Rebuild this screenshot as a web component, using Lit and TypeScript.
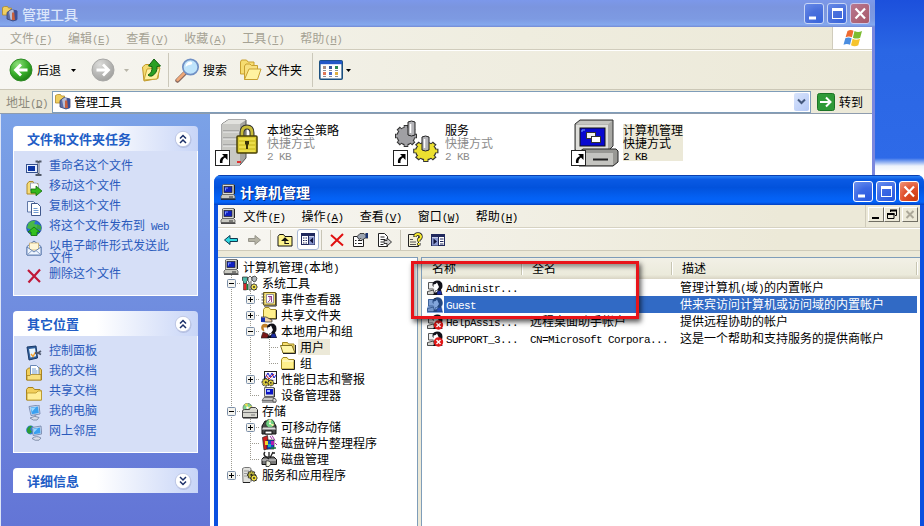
import { LitElement, html, css, svg, nothing } from "lit";
import { customElement, property } from "lit/decorators.js";

const SANS = css`"Noto Sans CJK SC", "Liberation Sans", sans-serif`;
const MONO = css`"Liberation Mono", "DejaVu Sans Mono", monospace`;

const shared = css`
  * { box-sizing: border-box; }
  .l { font-family: ${MONO}; font-size: 11px; letter-spacing: -0.6px; line-height: 0; vertical-align: 0.5px; white-space: pre; }
  svg { display: block; flex: none; }
  .t { white-space: nowrap; }
`;

/* Latin runs sit on a 6px grid, half the width of an ideograph. */
const t = (s: string) =>
  s.split(/([\x20-\x7e]+)/).map((p) => (/^[\x20-\x7e]+$/.test(p) ? html`<span class="l">${p}</span>` : p));

const pc = svg`<path d="M2.500 1l1-.5h10.500v9.500l-1 1H2.500z" fill="#dcdcd4" stroke="#555" stroke-width=".8"/><rect x="4" y="2.500" width="8" height="6" fill="#1020c0" stroke="#222" stroke-width=".7"/><path d="M5 3.500h3v1H6v2H5z" fill="#7a98ff"/><path d="M1 12l1.500-1.500h11l1.500 1.500v2.500H1z" fill="#c8c8c0" stroke="#555" stroke-width=".8"/><path d="M9 13h4" stroke="#333"/><path d="M14.500 1v9M1 15.300h14.500" stroke="#222"/>`;
const folder = svg`<path d="M1.500 4.500l1.500-2h4l1.500 2h5.500v9.500H1.500z" fill="#fff08c" stroke="#a08820"/><path d="M2.500 6h11" stroke="#fffde0"/><path d="M2 14.500h12.500V5" fill="none" stroke="#222"/>`;
const user = svg`<path d="M1.500 2.500h6v6.500h-6z" fill="#eee" stroke="#555"/><path d="M.5 11.500l6-1.500 1 4.500H.5z" fill="#d4d4d0" stroke="#222" stroke-width=".8"/><path d="M5.500 5.500Q5 .8 10 .5Q15.500.5 15.500 6Q15.500 9 14 9.500L15.500 15H6L8.500 10.500Z" fill="#101018"/><path d="M6.500 4.500q2.500 0 3.500-2l2 4.500-2 3H7.500L7 8.500H5.800l.7-2z" fill="#fff"/><path d="M8.500 10.500l3 0-3 2.500z" fill="#fff"/><path d="M10.500 11.500l3-1 1.500 4h-5z" fill="#1c2ca0"/>`;
const gear = svg`<path d="M8 1v14M1 8h14M3 3l10 10M13 3L3 13" stroke="#222" stroke-width="3.400"/><circle cx="8" cy="8" r="5.400" fill="#222"/><path d="M8 2v12M2 8h12M3.700 3.700l8.600 8.600M12.300 3.700l-8.600 8.600" stroke="currentColor" stroke-width="1.800"/><circle cx="8" cy="8" r="4.500" fill="currentColor"/><circle cx="8" cy="8" r="1.800" fill="#222"/>`;
const bigGear = svg`<g fill="none" stroke="#333"><path d="M12 1v22M1 12h22M4.200 4.200l15.600 15.600M19.800 4.200L4.200 19.800" stroke-width="4.600"/></g><circle cx="12" cy="12" r="9.300" fill="#333"/><path d="M12 2v20M2 12h20M5 5l14 14M19 5L5 19" stroke="currentColor" stroke-width="3"/><circle cx="12" cy="12" r="8.300" fill="currentColor"/>`;
const flag = svg`<path d="M4.500 1.500Q7.500-.5 10.500 1.200L8.900 7.800Q5.800 6 2.600 7.800Z" fill="#ee6a30"/><path d="M11.500 1.600Q15 3.500 19 1.600L17.200 8.200Q13.500 10 9.900 8.200Z" fill="#7cbc32"/><path d="M2.300 8.800Q5.500 7 8.600 8.800L7 15.300Q4 13.700.5 15.300Z" fill="#4b8ee0"/><path d="M9.600 9.300Q13.300 11 17 9.300L15.300 15.800Q11.700 17.500 8 15.800Z" fill="#f6c42c"/>`;

const ICONS: Record<string, unknown> = {
  pc, folder, user, flag,
  cross: svg`<path d="M2 2L14 14M14 1.500L2.500 14.500" stroke="#c01838" stroke-width="2.200" fill="none"/>`,
  redx: svg`<path d="M2 3L14 13.500M14 2L2 14" stroke="#e01010" stroke-width="2" fill="none"/>`,
  admin: svg`<path d="M.5 1.500l2-1h3l1 1.500h3V9h-9z" fill="#f0cf60" stroke="#b08a28" stroke-width=".8"/><path d="M5 6.500l4-3 6 1.500v8.500l-4 1.500-6-2z" fill="#5d6ea8" stroke="#3b4370" stroke-width=".8"/><path d="M7 5.500l3-2 1.500.5v10l-3-.500z" fill="#b8bed6"/><path d="M10 6.500h3.500v7.500H10z" fill="#c9603c"/><path d="M12 4l3 1v9l-2 .500z" fill="#3d4f96"/>`,
  rename: svg`<rect x=".5" y="4.500" width="11" height="8" fill="#e8f0ff" stroke="#35508c"/><rect x="2" y="6" width="7" height="5" fill="#0a34a4"/><path d="M9.500 1.500h2l1 1 1-1h2M12.500 2v12M9.500 15h2l1-1 1 1h2" fill="none" stroke="#505868" stroke-width="1.800"/><path d="M12.500 3v10" stroke="#d0d4e0" stroke-width=".7"/>`,
  move: svg`<path d="M1 4l2-2.500h4l1 2h4V14H1z" fill="#f6dc78" stroke="#ae8a28"/><path d="M4.500 3h6l2 2v6h-8z" fill="#fff" stroke="#8898b8" stroke-width=".8"/><path d="M5 9h5V6l6 5-6 4.800V13H5z" fill="#35b81e" stroke="#15700c" stroke-width=".8"/>`,
  copy: svg`<path d="M1.500 1.500h6l2 2V12h-8z" fill="#f4f8ff" stroke="#6078a8"/><path d="M5.500 3.500h6l3 3V15.500h-9z" fill="#fff" stroke="#40588c"/><path d="M7.500 8.500h4M7.500 10.500h5M7.500 12.500h5" stroke="#6f9ad0"/>`,
  web: svg`<circle cx="8" cy="7.800" r="7.400" fill="#2b70d0" stroke="#17488c" stroke-width=".7"/><path d="M2.500 3q4-3 7-2L8 4l4 1-2 4-4 1-5-2z" fill="#48b848"/><path d="M11 4l4 2v4L11 9z" fill="#3aa640"/><path d="M8 7l6 5h-3v3.500H5V12H2z" fill="#33c020" stroke="#127008" stroke-width=".8"/>`,
  mail: svg`<path d="M1 6.500L8 1l7 5.500V15H1z" fill="#dce8fa" stroke="#5a78ac"/><path d="M3.500 3h9v7h-9z" fill="#fff6d8" stroke="#c8a860" stroke-width=".7"/><path d="M1 7l7 5 7-5v8H1z" fill="#eef5ff" stroke="#5a78ac" stroke-width=".9"/><path d="M1.500 14.500L6 10.500M14.500 14.500L10 10.500" stroke="#88a0c8"/>`,
  cpl: svg`<path d="M1 2l9-1 1.500 12L3 15z" fill="#2f5f9c" stroke="#183868"/><path d="M3 4l6-.7 1 8-5.500 1.200z" fill="#e8f6ff"/><path d="M5 9l2 2.500L9.500 7" stroke="#f0a030" stroke-width="1.500" fill="none"/><path d="M9 8h3l3-2M12 8l3 1.500" stroke="#505a70" stroke-width="1.800" fill="none"/>`,
  docs: svg`<path d="M.5 5l2-2h11.500l1.500 2v10H.5z" fill="#f2cf5c" stroke="#a88420"/><path d="M4.500 .5h6l2.500 2.500v9h-8.500z" fill="#fff" stroke="#6888b8"/><path d="M6 4h4M6 6h5.500M6 8h5.500" stroke="#6f9ad0"/><path d="M1 10.500h3l1-1h10v5.500H1z" fill="#f8e080" stroke="#a88420" stroke-width=".8"/>`,
  share: svg`<path d="M.5 4.500L2 2.500h5l1.500 2h5.500l1.500 1.500V15H.5z" fill="#f2cf5c" stroke="#a88420"/><path d="M1 8h9l2-2h3.500v9H1z" fill="#ffee98" stroke="#b89428" stroke-width=".8"/>`,
  mypc: svg`<path d="M3 1.500L13 0 14 9 5 10.500z" fill="#d0dcf0" stroke="#6a7ca4" stroke-width=".8"/><path d="M4.500 2.500l7.500-1 .8 6.500-7 1.200z" fill="#3aa0f0"/><path d="M5 3l5-.700-4 4.500z" fill="#9ad8ff"/><path d="M8 10.500l2-.5.500 2.500h-2z" fill="#8898b8"/><path d="M4 13q5-3 9-.5l-2 2.500q-4 1-7-2z" fill="#d8dce8" stroke="#7080a0" stroke-width=".8"/>`,
  net: svg`<circle cx="4.500" cy="5" r="4.400" fill="#2f80d0"/><path d="M1 4q2-4 5-3L4 4l2 3-3 2-2-2z" fill="#2c9c34"/><path d="M6 2.500L15 1l.7 8-8.500 1.500z" fill="#d0dcf0" stroke="#6a7ca4" stroke-width=".8"/><path d="M7.300 3.500l6.700-1 .5 5.700-6.400 1.100z" fill="#3aa0f0"/><path d="M7.500 4l4.500-.700-3.800 4z" fill="#9ad8ff"/><path d="M6 13.500q4.500-3.500 9-.5l-2 2.200q-4 1-7-1.700z" fill="#d8dce8" stroke="#7080a0" stroke-width=".8"/>`,
  tools: svg`<path d="M.5 2h5v3.500l-1 1v2h-3v-2l-1-1z" fill="#50b8a8" stroke="#222" stroke-width=".7"/><path d="M1.500 8.500h3V15h-3z" fill="#e02828" stroke="#222" stroke-width=".5"/><path d="M6 3l2-2 2 2v2.500l-1 1V15H7V7L6 6z" fill="#e8e8e8" stroke="#222" stroke-width=".7"/><path d="M5.500 9v6" stroke="#128038" stroke-width="1.500"/><path d="M10 2l3-1 2 2-1 3-2 1-2-2z" fill="#b0b8c0" stroke="#222" stroke-width=".7"/><g transform="translate(8 8) scale(.5)" color="#f0e050">${gear}</g>`,
  event: svg`<path d="M2.500 1.500h12v12.500h-12z" fill="#f4e078" stroke="#6a5a10"/><path d="M15.200 2v13H3" stroke="#222" fill="none"/><path d="M.5 3h3M.5 6h3M.5 9h3M.5 12h3" stroke="#555"/><path d="M5.500 3.500h7v8.500h-7z" fill="#fff" stroke="#6a6a90" stroke-width=".7"/><path d="M7 5.500h4M9 5.500V9l-2 2M10.500 6v5" stroke="#8a2a80" stroke-width=".9" fill="none"/>`,
  sfolder: svg`<path d="M2.500 2.500l1.500-2h4l1.500 2H15v9H2.500z" fill="#fff08c" stroke="#a08820"/><path d="M15.500 3v9H9" stroke="#222" fill="none"/><path d="M0 10l5 0 6 3v2H6L0 14.500z" fill="#f0d0a8" stroke="#222" stroke-width=".7"/><path d="M0 10.500h4V15H0z" fill="#1430b0"/>`,
  users: svg`<circle cx="4" cy="4.500" r="3.800" fill="#c08028"/><path d="M0 15l2-6 5 2 1 4z" fill="#7a1818" stroke="#222" stroke-width=".6"/><path d="M2.500 4.500h4v4h-3z" fill="#fff"/><path d="M6 5.500Q5.500.8 10.500.5Q15.500.5 15.500 6Q15.500 9 14 9.500L16 15H6L8.500 10.500Z" fill="#101018"/><path d="M6.500 4.500q2.500 0 3.500-2l2 4.500-2 3H7.500L7 8.500H5.800z" fill="#fff"/><path d="M8.500 10.500h3l-3 2.500z" fill="#fff"/><path d="M10.500 11.500l3-1 2 4h-5.500z" fill="#1c2ca0"/>`,
  openf: svg`<path d="M2.500 13V3.500h5l1 1.500h5.500v8z" fill="#f8e070" stroke="#a08820"/><path d="M.5 6.500h11.500l3 7.500H3z" fill="#fff6a8" stroke="#807020"/><path d="M3 14.500h12.500V6" stroke="#222" fill="none"/>`,
  perf: svg`<rect x="3.500" y=".5" width="12" height="12" fill="#fff" stroke="#222"/><path d="M4 3h11M4 6h11M4 9h11M7 1v11M11 1v11" stroke="#b8b8f0" stroke-width=".5"/><path d="M4 7l3-5 2 4 2-4 2 5 2-3" stroke="#1818c8" fill="none"/><path d="M5 4l3 4 5-5" stroke="#d01818" fill="none" stroke-width=".9"/><g transform="translate(0 6.500) scale(.6)" color="#e0d040">${gear}</g><g transform="translate(6 8) scale(.48)" color="#e0d040">${gear}</g>`,
  device: svg`<path d="M3.500.5h9.500v9h-9.500z" fill="#e0e0dc" stroke="#666"/><path d="M13.500 1v9" stroke="#333"/><rect x="5" y="2" width="7" height="5.500" fill="#0a14c4"/><path d="M6 3h3v2H6z" fill="#a0b8ff"/><path d="M1 13.500l2-3h10l2 3z" fill="#c8c8c4" stroke="#555" stroke-width=".8"/><path d="M1 15h14" stroke="#444"/><path d="M12 11.500q4-.5 3 3.500h-3z" fill="#ddd" stroke="#333" stroke-width=".7"/>`,
  storage: svg`<circle cx="5.500" cy="4.800" r="4.500" fill="#7cd48c" stroke="#666" stroke-width=".7"/><path d="M5.500 4.800L2.500 1.300 5.500.3zM5.500 4.800l4-2 .5 3z" fill="#f0e050"/><circle cx="5.500" cy="4.800" r="1.200" fill="#fff"/><path d="M.5 7.500l2-1h5l1-2h5l2 2v8H.5z" fill="#d8d8d0" stroke="#444"/><path d="M1 9.500h14M9 12h4" stroke="#777"/><path d="M1 15h14.500V7" fill="none" stroke="#222"/>`,
  remov: svg`<path d="M1 7l3-5h8l3 5v8H1z" fill="#484848" stroke="#111"/><circle cx="9" cy="4.500" r="4.300" fill="#70d080" stroke="#222" stroke-width=".7"/><path d="M9 4.500L7.500.5h3zM9 4.500l4.500 1-2 2z" fill="#f0f0a0"/><circle cx="9" cy="4.500" r="1" fill="#fff"/><path d="M2 8.500h12l1 2H1z" fill="#ddd"/><path d="M4 12h7v3H4z" fill="#fff" stroke="#111"/>`,
  defrag: svg`<path d="M1.500 2.500l5-2 1.500 13-5 1.500z" fill="#d02020" stroke="#222" stroke-width=".7"/><path d="M6 5h7v9H6z" fill="#1848c8" stroke="#222" stroke-width=".7"/><path d="M7 9h3v3H7z" fill="#18b8b8"/><path d="M10 6h3v4h-3z" fill="#b020b0"/><path d="M4 6h3v4H4z" fill="#f0d830"/><path d="M9 1l2 3M11 .5l3 5M14 8l2 2" stroke="#a030a0"/><path d="M10 13h5" stroke="#18803a" stroke-width="1.500"/>`,
  disk: svg`<path d="M1 8l2-2h10l2.500 2.500v5H1z" fill="#787878" stroke="#111"/><path d="M1 9h14" stroke="#ddd"/><path d="M4 1q-2 2 0 4l4 3M8 1v5M12 1l-3 6M11 2h3" stroke="#222" stroke-width="1.300" fill="none"/><path d="M5 10q4-1 5 3l-2 2.500H5z" fill="#f0f0e0" stroke="#222" stroke-width=".8"/>`,
  svc: svg`<path d="M.5 1.500l2-1h5l1.500 1v13l-1 1h-7z" fill="#e0e0dc" stroke="#777"/><path d="M2 4h5M2 6.500h5M2 9h5" stroke="#999"/><path d="M1 15.500h7" stroke="#222"/><g transform="translate(4.500 3) scale(.62)" color="#c0b840">${gear}</g><g transform="translate(8 7) scale(.5)" color="#f0e040">${gear}</g>`,
  tback: svg`<path d="M1.500 8L7 3.500v3h7.500v3H7v3z" fill="#30d8e0" stroke="#103850"/>`,
  tfwd: svg`<path d="M14.500 8L9 3.500v3H2.500v3H9v3z" fill="#b4b2a4" stroke="#96948a"/>`,
  tup: svg`<path d="M1 4.500l1.500-2h4l1.500 2h7V14H1z" fill="#fff48c" stroke="#111"/><path d="M8 6.500v5h4M5.500 8.500L8 6l2.500 2.500z" stroke="#111" fill="none" stroke-width="1.200"/>`,
  tpane: svg`<rect x="1.500" y="2.500" width="13" height="11" fill="#fff" stroke="#20285c"/><path d="M1 4h14" stroke="#20285c" stroke-width="2"/><path d="M3 7h1.500M5.500 7H7M3 9.500h1.500M5.500 9.500H7M3 12h1.500M5.500 12H7" stroke="#20285c"/><rect x="8.500" y="5.500" width="6" height="8" fill="#8c9ad0"/><path d="M8.500 5v8.500" stroke="#20285c"/><path d="M13 6.500v6L9.700 9.500z" fill="#10143c"/>`,
  tpane2: svg`<rect x="1.500" y="2.500" width="13" height="11" fill="#fff" stroke="#20285c"/><path d="M1 4h14" stroke="#20285c" stroke-width="2"/><rect x="2" y="5.500" width="6" height="8" fill="#8c9ad0"/><path d="M3.500 6.500v6L7 9.500z" fill="#10143c"/><path d="M8.500 3v11" stroke="#20285c"/><path d="M10 7h3.500M10 9.500h3.500M10 12h3.500" stroke="#20285c"/>`,
  tprop: svg`<path d="M1.500 4.500h10v10h-10z" fill="#fff" stroke="#222"/><path d="M3 8.500h1.500M6 8.500h4M3 11.500h1.500M6 11.500h4" stroke="#222"/><path d="M5 4.500L8 1.500h4l1.500 1.500H16v3h-3L10.500 8 9 6.500 7 7.500z" fill="#9ca4b0" stroke="#222" stroke-width=".8"/><path d="M13.500 1h2.500v5h-2.500z" fill="#1c3470"/>`,
  texp: svg`<path d="M2.500 1.500h6l3 3v10h-9z" fill="#fff" stroke="#222"/><path d="M4.500 5h4M4.500 7.500h5M4.500 10h3M4.500 12.500h3" stroke="#222"/><path d="M8 8.500h3V6l4.500 4-4.500 4v-2.500H8z" fill="#d0d0d0" stroke="#222" stroke-width=".9"/>`,
  thelp: svg`<path d="M1.500 2.500h8l2 2v10h-10z" fill="#f4f0d8" stroke="#222"/><path d="M3 7.500h3M3 10h6M3 12.500h6" stroke="#555"/><path d="M8 5Q8 2 11 2t3 2.800Q14 6.500 11.800 7.500V9.500M11.800 11v2.500" stroke="#222" stroke-width="3.400" fill="none"/><path d="M8 4.500Q8.500 2 11 2t3 2.800Q14 6.500 11.800 7.500V9.500M11.800 11v2" stroke="#f6ea30" stroke-width="2" fill="none"/>`,
};

const ic = (name: string, size = 16, box = "0 0 16 16") =>
  html`<svg width=${size} height=${size} viewBox=${box}>${ICONS[name]}</svg>`;

const userIcon = (kind: string) => html`<svg width="17" height="16" viewBox="0 0 17 16">
  ${user}
  ${kind === "off" ? svg`<circle cx="11.500" cy="11" r="4.700" fill="#e01818"/><path d="M9.500 9l4 4M13.500 9l-4 4" stroke="#fff" stroke-width="1.400"/>` : nothing}
  ${kind === "sel" ? svg`<path d="M1 2h7l2-2 4 1 2 5-1 4 1 6H0v-5l1-2z" fill="#316ac5" opacity=".6"/>` : nothing}
</svg>`;

const shortcut = svg`<rect x=".5" y="31.500" width="14" height="15" fill="#fff" stroke="#222"/><path d="M5 44q-1-5 4-7l-2-2h5.500v6L10 38.500q-3 1.500-2.500 5.500z" fill="#000"/>`;

const bigServer = html`<svg width="48" height="48" viewBox="0 0 48 48">
  <path d="M7 5l6-4h18v38l-6 7H7z" fill="#a4a4a0" stroke="#555"/><path d="M7 5h18v41H7z" fill="#c8c8c4"/><path d="M7 5l6-4h18l-6 4z" fill="#e2e2de"/>
  <path d="M8 12h16M8 19h16M8 26h16" stroke="#888"/><path d="M8 13h16M8 20h16M8 27h16" stroke="#eee"/><rect x="22" y="42" width="4" height="2" fill="#e03030"/>
  <path d="M27 18v-4q0-6 5-6t5 6v4" fill="none" stroke="#333" stroke-width="5"/><path d="M27 18v-4q0-6 5-6t5 6v4" fill="none" stroke="#c8bc38" stroke-width="2.800"/>
  <rect x="22" y="17" width="20" height="17" rx="1" fill="#d8c830" stroke="#4a4208" stroke-width="1.500"/><path d="M24 20h16M24 24h16M24 28h16M24 32h16" stroke="#fff468"/><path d="M30 22h4v3l-1 1v4h-2v-4l-1-1z" fill="#3a3408"/>
  ${shortcut}</svg>`;
const bigGears = html`<svg width="48" height="48" viewBox="0 0 48 48">
  <g transform="translate(1 5)" color="#a0a0a4">${bigGear}</g><g transform="translate(19 20) scale(1.150 1)" color="#ece030">${bigGear}</g>
  <path d="M15 3q3.500-2 7 0v13q-3.500 2-7 0z" fill="#b4b4b8" stroke="#222"/><path d="M29 18q3.500-2 7 0v13q-3.500 2-7 0z" fill="#b4b4b8" stroke="#222"/><path d="M17.500 5v9M31.500 20v9" stroke="#fff" stroke-width="1.500"/>
  ${shortcut}</svg>`;
const bigPc = html`<svg width="48" height="48" viewBox="0 0 48 48">
  <path d="M4 5l5-4h33v26l-4 4H4z" fill="#a8a8a4" stroke="#333"/><path d="M5 6h32v25H5z" fill="#dededa"/><path d="M5 5.500L9.500 2H41l-4 3.500z" fill="#c4c4c0"/>
  <rect x="9" y="9" width="25" height="18" fill="#0808d0" stroke="#111"/><path d="M11 13v-2h3" stroke="#78a0ff" fill="none"/><rect x="15.500" y="13.500" width="9" height="6" fill="#f0f0f0" stroke="#333"/><rect x="20.500" y="17.500" width="9" height="6" fill="#fff" stroke="#333"/>
  <path d="M8 33l4-3h33l2 2v11l-5 4H8z" fill="#989894" stroke="#222"/><path d="M8 34h34v12H8z" fill="#c4c4c0"/><path d="M22 40.500h15" stroke="#222" stroke-width="2"/>
  ${shortcut}</svg>`;

const bigUp = html`<svg width="21" height="24" viewBox="0 0 21 24"><path d="M1.500 9l3-2.500h5l1 2 8-1-1.500 13L3 23z" fill="#f6dc70" stroke="#c09828"/><path d="M3 22l3-11 13-1-3 11z" fill="#fff2a4" stroke="#c8a434"/><path d="M13 1l6.500 7-3.500.5Q16.500 15 11 18q-3 .5-4-1 4.500-2 4-8.500L7.500 8z" fill="#2aa024" stroke="#14620f"/></svg>`;
const bigSearch = html`<svg width="25" height="25" viewBox="0 0 25 25"><path d="M10 15l-7.500 7.500" stroke="#8a6a60" stroke-width="4.500" stroke-linecap="round"/><path d="M9.500 15l-7 7" stroke="#f0a878" stroke-width="2.500" stroke-linecap="round"/><circle cx="15.500" cy="9" r="7.700" fill="#bfe4fb" stroke="#7090c4" stroke-width="1.700"/><path d="M10.500 9q0-5 5-5.500 3 1 1 3-4 0-6 2.500z" fill="#fff"/></svg>`;
const bigFolders = html`<svg width="23" height="22" viewBox="0 0 23 22"><path d="M1.500 15V3l1-2h5l1.500 2h6v12z" fill="#f6dc70" stroke="#c8a030"/><path d="M5.500 20.500V7l1.500-2h4l1.500 1.500h6v4" fill="#f8e080" stroke="#c8a030"/><path d="M5.500 20.500L10 10h12l-3.500 10.500z" fill="#fff2a0" stroke="#c8a030"/></svg>`;
const bigViews = html`<svg width="24" height="20" viewBox="0 0 24 20"><rect x=".8" y=".8" width="22.400" height="18.400" rx="1" fill="#fff" stroke="#1c5080" stroke-width="1.600"/><path d="M1 2.500h22" stroke="#2458c8" stroke-width="3.400"/><rect x="4" y="6" width="3" height="3" fill="#a89088"/><rect x="10" y="6" width="3" height="3" fill="#38589c"/><rect x="16" y="6" width="3" height="3" fill="#2a8a50"/><rect x="4" y="12" width="3" height="3" fill="#e07858"/><rect x="10" y="12" width="3" height="3" fill="#4468c8"/><rect x="16" y="12" width="3" height="3" fill="#e0b040"/><path d="M4 10.500h3M10 10.500h3M16 10.500h3M4 16.500h3M10 16.500h3M16 16.500h3" stroke="#8a9098"/></svg>`;
const circle = (on: boolean) => html`<svg width="24" height="24" viewBox="0 0 24 24">
  <defs><radialGradient id=${on ? "on" : "dim"} cx=".35" cy=".25" r=".8"><stop offset="0" stop-color=${on ? "#8fe07c" : "#dcdcda"}/><stop offset=".6" stop-color=${on ? "#36ac28" : "#b6b6b4"}/><stop offset="1" stop-color=${on ? "#1c7c14" : "#a0a09e"}/></radialGradient></defs>
  <circle cx="12" cy="12" r="11" fill=${on ? "url(#on)" : "url(#dim)"} stroke=${on ? "#2f8a26" : "#a8a8a6"}/>
  <path d=${on ? "M18.500 12H7M12 6.500L6.500 12l5.500 5.500" : "M5.500 12H17M12 6.500l5.500 5.500-5.500 5.500"} fill="none" stroke="#fff" stroke-width="2.800"/></svg>`;
const caret = (c: string) => html`<svg width="5" height="3" viewBox="0 0 5 3"><path d="M0 0h5L2.500 3z" fill=${c}/></svg>`;

@customElement("caption-buttons")
class CaptionButtons extends LitElement {
  @property({ type: Boolean }) active = false;
  static styles = [shared, css`
    :host { display: flex; gap: 2.500px; }
    .b { width: 20.500px; height: 21px; border: 1px solid #fff; border-radius: 3px; background: radial-gradient(circle at 80% 90%, #2a5ae0, #3c68e4 50%, #6f94f0); }
    .dim { border-color: #c8d6f6; background: radial-gradient(circle at 80% 90%, #3a66dc, #4a70dc 50%, #6a8ce8); }
    .x { background: radial-gradient(circle at 80% 90%, #cc3c10, #e0502c 50%, #f0987c); }
    .dimx { border-color: #c8c8ec; background: linear-gradient(135deg, #b87890, #a85868); }
  `];
  render() {
    const glyphs = [
      svg`<rect x="4" y="12.500" width="7" height="3" fill="#fff"/>`,
      svg`<path d="M4 4h11v11H4zM5 7h9v7H5z" fill="#fff" fill-rule="evenodd"/>`,
      svg`<path d="M4.500 4.500l9.500 10M14 4.500L4.500 14.500" stroke="#fff" stroke-width="2.200"/>`,
    ];
    return glyphs.map((g, i) => html`<div class="b ${this.active ? (i === 2 ? "x" : "") : i === 2 ? "dimx" : "dim"}"><svg width="18" height="19">${g}</svg></div>`);
  }
}

@customElement("task-card")
class TaskCard extends LitElement {
  @property() heading = "";
  @property({ attribute: false }) items: string[][] = [];
  @property({ type: Boolean }) closed = false;
  static styles = [shared, css`
    :host { display: block; color: #2a5abc; font: 12px/12px ${SANS}; }
    .head { height: 25px; padding: 0 6px 0 14px; display: flex; align-items: center; justify-content: space-between; border-radius: 4px 4px 0 0; background: linear-gradient(90deg, #fff 45%, #c8d5f7); font-size: 13px; font-weight: 700; color: #215dc6; }
    .body { border: 1px solid #fff; border-top: 0; background: #d6dff7; padding: 6px 0 10px 12px; }
    .item { display: flex; gap: 7px; min-height: 20px; align-items: flex-start; }
    .item svg { margin-top: 3px; }
    .lab { padding-top: 2px; white-space: pre-line; }
    .two { min-height: 28px; }
  `];
  render() {
    return html`<div class="head"><span>${this.heading}</span>
        <svg width="18" height="18" viewBox="0 0 18 18"><circle cx="9.500" cy="10" r="8" fill="#a8b4d8" opacity=".7"/><circle cx="9" cy="9" r="7.700" fill="#fff" stroke="#b4bede" stroke-width=".8"/>
        <path d=${this.closed ? "M6 5l3 3 3-3M6 9.500l3 3 3-3" : "M6 8.500l3-3 3 3M6 13l3-3 3 3"} fill="none" stroke="#1c3068" stroke-width="1.500"/></svg></div>
      ${this.closed ? nothing : html`<div class="body">${this.items.map(([icon, label]) => html`<div class="item ${label.includes("\n") ? "two" : ""}">${ic(icon)}<div class="lab">${t(label)}</div></div>`)}</div>`}`;
  }
}

const menu = (items: string[][]) => items.map(([a, k]) => html`<span class="t">${a}<span class="l">(<u>${k}</u>)</span></span>`);

@customElement("explorer-window")
class ExplorerWindow extends LitElement {
  static styles = [shared, css`
    :host { box-sizing: border-box; display: flex; flex-direction: column; width: 875px; height: 526px; border-right: 3px solid #7b87dd; background: #fff; font: 12px/12px ${SANS}; color: #000; }
    .title { height: 27px; flex: none; display: flex; align-items: center; gap: 4px; padding: 0 5px 0 2px; margin-right: -3px; background: linear-gradient(#7c98ea, #7b95df 25%, #7d9ae2 70%, #84a8ee 92%, #7389d4); }
    .name { flex: 1; font-size: 14px; font-weight: 500; color: #dbe6fb; }
    .menu { height: 23px; flex: none; display: flex; border-bottom: 1px solid #d0ccbc; background: linear-gradient(90deg, #f6f5f1, #efeddf 60%, #ece9d8); color: #a5a294; }
    .items { flex: 1; display: flex; align-items: center; gap: 16px; padding-left: 10px; border-right: 1px solid #d0ccbc; }
    .flag { width: 39px; background: #fff; display: flex; align-items: center; justify-content: center; }
    .bar { height: 40px; flex: none; display: flex; align-items: center; background: linear-gradient(90deg, #f7f6f2, #f0eee2 50%, #ece9d8); border-top: 1px solid #fff; border-bottom: 1px solid #cbc7b6; padding-left: 9px; }
    .sep { width: 1px; height: 34px; background: #cbc8ba; }
    .g1 { width: 4px; } .g0 { width: 10px; } .g2 { width: 9px; } .g3 { width: 12px; } .g5 { width: 6px; } .g6 { width: 3px; }
    .addr { height: 23px; flex: none; display: flex; align-items: center; background: #ece9d8; color: #8c897c; }
    .albl { width: 52px; padding-left: 6px; }
    .box { width: 759px; height: 22px; background: #fff; border: 1px solid #7f9db9; display: flex; align-items: center; gap: 3px; padding: 0 1px 0 2px; color: #000; }
    .box span { flex: 1; }
    .dd { width: 15px; height: 18px; border-radius: 2px; background: linear-gradient(135deg, #d8e4fc, #b4c8f6); display: flex; align-items: center; justify-content: center; }
    .go { margin: 0 4px 0 6px; }
    .golab { color: #000; }
    .main { flex: 1; display: flex; border-top: 1px solid #8e9cae; min-height: 0; }
    .side { width: 210px; border-left: 1px solid #dce4f6; background: linear-gradient(#7ba2e7, #6375d6); padding: 12px 12px 0; display: flex; flex-direction: column; gap: 15px; }
    .files { display: flex; align-items: flex-start; padding: 5px 0 0 5px; }
    .file { width: 178px; display: flex; gap: 4px; }
    .meta { margin-top: 5px; white-space: nowrap; line-height: 12px; height: 37px; color: #8c8c8c; }
    .meta > div { height: 12px; }
    .meta > .fn { height: 13px; color: #000; }
    .meta.sel { background: #ece9d8; color: #000; }
  `];
  render() {
    const files: [unknown, string, boolean][] = [[bigServer, "本地安全策略", false], [bigGears, "服务", false], [bigPc, "计算机管理", true]];
    return html`
      <div class="title">${ic("admin")}<span class="name">管理工具</span><caption-buttons></caption-buttons></div>
      <div class="menu"><div class="items">${menu([["文件", "F"], ["编辑", "E"], ["查看", "V"], ["收藏", "A"], ["工具", "T"], ["帮助", "H"]])}</div>
        <div class="flag">${ic("flag", 20, "0 0 20 17")}</div></div>
      <div class="bar">${circle(true)}<i class="g1"></i><span>后退</span><i class="g0"></i>${caret("#000")}<i class="g3"></i><i class="g6"></i>${circle(false)}<i class="g2"></i>${caret("#b8b5a8")}<i class="g3"></i>${bigUp}<i class="g5"></i><i class="sep"></i><i class="g5"></i>${bigSearch}<i class="g6"></i><span>搜索</span><i class="g3"></i>${bigFolders}<i class="g1"></i><span>文件夹</span><i class="g0"></i><i class="sep"></i><i class="g5"></i>${bigViews}<i class="g6"></i>${caret("#000")}</div>
      <div class="addr"><span class="albl">地址<span class="l">(<u>D</u>)</span></span>
        <div class="box">${ic("admin")}<span>管理工具</span><div class="dd"><svg width="9" height="7"><path d="M1 1.500L4.500 5 8 1.500" fill="none" stroke="#44587c" stroke-width="2"/></svg></div></div>
        <svg class="go" width="18" height="18"><rect x=".5" y=".5" width="17" height="17" rx="2" fill="#2f9a38" stroke="#1c7426"/><path d="M3 9h10M9 4.500L13.500 9 9 13.500" stroke="#fff" stroke-width="2" fill="none"/></svg><span class="golab">转到</span></div>
      <div class="main">
        <div class="side">
          <task-card heading="文件和文件夹任务" .items=${[["rename", "重命名这个文件"], ["move", "移动这个文件"], ["copy", "复制这个文件"], ["web", "将这个文件发布到 Web"], ["mail", "以电子邮件形式发送此\n文件"], ["cross", "删除这个文件"]]}></task-card>
          <task-card heading="其它位置" .items=${[["cpl", "控制面板"], ["docs", "我的文档"], ["share", "共享文档"], ["mypc", "我的电脑"], ["net", "网上邻居"]]}></task-card>
          <task-card heading="详细信息" closed></task-card>
        </div>
        <div class="files">${files.map(([icon, name, sel]) => html`<div class="file">${icon}<div class="meta ${sel ? "sel" : ""}"><div class="fn">${name}</div><div>快捷方式</div><div>${t("2 KB")}</div></div></div>`)}</div>
      </div>`;
  }
}

@customElement("console-tree")
class ConsoleTree extends LitElement {
  static styles = [shared, css`
    :host { box-sizing: border-box; display: block; font: 12px/16px ${SANS}; padding: 1px 0 0 4px; }
    .row { height: 16px; display: flex; }
    .icon { margin: 0 2px 0 1px; }
    .lab { padding: 0 2px; white-space: nowrap; }
    .sel { background: #ece9d8; padding-right: 6px; }
  `];
  rows: [string[], string, string][] = [
    [[], "pc", "计算机管理(本地)"],
    [["t-"], "tools", "系统工具"],
    [["v", "t+"], "event", "事件查看器"],
    [["v", "t+"], "sfolder", "共享文件夹"],
    [["v", "t-"], "users", "本地用户和组"],
    [["v", "v", "t"], "openf", "用户"],
    [["v", "v", "l"], "folder", "组"],
    [["v", "t+"], "perf", "性能日志和警报"],
    [["v", "l"], "device", "设备管理器"],
    [["t-"], "storage", "存储"],
    [["v", "t+"], "remov", "可移动存储"],
    [["v", "t"], "defrag", "磁盘碎片整理程序"],
    [["v", "l"], "disk", "磁盘管理"],
    [["l+"], "svc", "服务和应用程序"],
  ];
  cell(c: string) {
    const d = (c[0] === "l" ? "M9.5 0V8" : "M9.5 0V16") + (c[0] === "v" ? "" : "M9 8.500H19");
    return html`<svg width="19" height="16"><path d=${d} stroke="#9c9a90" stroke-dasharray="1 1" fill="none"/>
      ${c[1] ? svg`<rect x="5.500" y="4.500" width="8" height="8" rx="1" fill="#f4f3ee" stroke="#7b8fa8"/><path d=${c[1] === "+" ? "M7 8.500h5M9.500 6v5" : "M7 8.500h5"} stroke="#000"/>` : nothing}</svg>`;
  }
  render() {
    return this.rows.map(([cells, icon, label]) => html`<div class="row">${cells.map((c) => this.cell(c))}<span class="icon">${ic(icon)}</span><span class="lab ${label === "用户" ? "sel" : ""}">${t(label)}</span></div>`);
  }
}

@customElement("console-window")
class ConsoleWindow extends LitElement {
  static styles = [shared, css`
    :host { box-sizing: border-box; display: flex; flex-direction: column; background: #0a50e0; border-radius: 7px 7px 0 0; overflow: hidden; font: 12px/12px ${SANS}; color: #000; }
    .title { height: 30px; flex: none; display: flex; align-items: center; gap: 4px; padding: 2px 5px 0 6px; border-top: 1px solid #0a3fb0; background: linear-gradient(#2a80f4, #0a5ae4 12%, #0252dc 40%, #0461f4 75%, #0464fa 90%, #0340c0); }
    .name { flex: 1; color: #fff; font-size: 14px; font-weight: 700; text-shadow: 1px 1px #0a2a80; }
    .frame { flex: 1; min-height: 0; display: flex; flex-direction: column; margin: 0 4px 0 4px; background: #ece9d8; }
    .menu { height: 23px; flex: none; display: flex; border-bottom: 1px solid #d6d2c2; background: linear-gradient(90deg, #f7f6f2, #ece9d8 80%); }
    .items { flex: 1; display: flex; align-items: center; gap: 16px; padding-left: 2px; border-right: 1px solid #d0ccbc; }
    .items svg { margin-right: -8.500px; }
    .mdi { display: flex; align-items: center; padding: 0 2px 3px; }
    .m { width: 16px; height: 15px; background: #ece9d8; border: 1px solid; border-color: #fff #716f64 #716f64 #fff; }
    .m:last-child { margin-left: 2px; }
    .bar { height: 23px; flex: none; display: flex; align-items: center; border-top: 1px solid #fff; border-bottom: 1px solid #cfcbba; background: linear-gradient(90deg, #f7f6f2, #ece9d8 80%); padding-left: 5px; }
    .sep { width: 1px; height: 20px; background: #c8c5b6; margin: 0 6px 0 8px; }
    .s2 { margin: 0 7px 0 2px; }
    .tog { width: 22px; height: 21px; border: 1px solid #a8b8d4; border-radius: 3px; background: #fff; margin-left: 4px; padding: 1px 2px; }
    .gap { margin-left: 8px; } .gap7 { margin-left: 7px; }
    .panes { flex: 1; min-height: 0; display: flex; margin-top: 6px; gap: 3px; }
    console-tree { width: 200px; background: #fff; border-top: 1px solid #7f9db9; border-right: 1px solid #7f9db9; }
    .list { flex: 1; background: #fff; border: 1px solid #7f9db9; border-width: 1px 0 0 1px; }
    .r { display: grid; grid-template-columns: 5px 17px 84px 150px 1fr 3px; height: 17px; align-items: center; white-space: nowrap; }
    .h { height: 21px; display: grid; grid-template-columns: 100px 150px 245px; background: linear-gradient(#f2f0e6, #ebeadb 80%, #d8d4c4); align-items: center; }
    .h span { height: 13px; border-right: 1px solid #c7c5b2; padding-left: 10px; box-shadow: 1px 0 #fff; }
    .c { height: 17px; line-height: 16px; padding-left: 2px; }
    .on .c { background: #316ac5; color: #fff; }
  `];
  render() {
    const rows = [["on", "Administr...", "", "管理计算机(域)的内置帐户"], ["sel", "Guest", "", "供来宾访问计算机或访问域的内置帐户"], ["off", "HelpAssis...", "远程桌面助手帐户", "提供远程协助的帐户"], ["off", "SUPPORT_3...", "CN=Microsoft Corpora...", "这是一个帮助和支持服务的提供商帐户"]];
    return html`
      <div class="title">${ic("pc")}<span class="name">计算机管理</span><caption-buttons active></caption-buttons></div>
      <div class="frame">
        <div class="menu"><div class="items">${ic("pc")}${menu([["文件", "F"], ["操作", "A"], ["查看", "V"], ["窗口", "W"], ["帮助", "H"]])}</div>
          <div class="mdi"><div class="m"><svg width="14" height="13"><path d="M3 10h7" stroke="#000" stroke-width="2"/></svg></div>
            <div class="m"><svg width="14" height="13"><path d="M5.500 4V2.500h6v5H10M2.500 5.500h6.500v5H2.500z" stroke="#000" fill="none"/><path d="M5 2.500h7M2 6h7.500" stroke="#000" stroke-width="2"/></svg></div>
            <div class="m"><svg width="14" height="13"><path d="M3.500 3l7 7M10.500 3l-7 7" stroke="#aca899" stroke-width="2"/></svg></div></div></div>
        <div class="bar">${ic("tback")}<span class="gap7"></span>${ic("tfwd")}<i class="sep"></i>${ic("tup")}<div class="tog">${ic("tpane")}</div><i class="sep s2"></i>${ic("redx")}<span class="gap7"></span>${ic("tprop")}<span class="gap"></span>${ic("texp")}<i class="sep"></i>${ic("thelp")}<span class="gap7"></span>${ic("tpane2")}</div>
        <div class="panes">
          <console-tree></console-tree>
          <div class="list">
            <div class="h"><span>名称</span><span>全名</span><span>描述</span></div>
            ${rows.map(([k, n, f, d]) => html`<div class="r ${k === "sel" ? "on" : ""}"><span></span>${userIcon(k)}<span class="c">${t(n)}</span><span class="c">${t(f)}</span><span class="c">${t(d)}</span></div>`)}
          </div>
        </div>
      </div>`;
  }
}

@customElement("app-root")
class AppRoot extends LitElement {
  static styles = css`
    :host { display: block; position: relative; width: 924px; height: 526px; overflow: hidden; background: linear-gradient(#1c50dc, #2a66e4 50px, #2e6ae8 158px, #eef3fb 166px, #fff 172px); }
    explorer-window { position: absolute; left: 0; top: 0; }
    console-window { position: absolute; left: 214px; top: 175px; width: 710px; height: 351px; }
    .mark { position: absolute; box-sizing: border-box; left: 411px; top: 261px; width: 228px; height: 58px; border: 3px solid #e8141a; box-shadow: 2px 3px 5px rgba(0, 0, 0, .65), inset 2px 3px 4px rgba(0, 0, 0, .4); }
  `;
  render() {
    return html`<explorer-window></explorer-window><console-window></console-window><div class="mark"></div>`;
  }
}
